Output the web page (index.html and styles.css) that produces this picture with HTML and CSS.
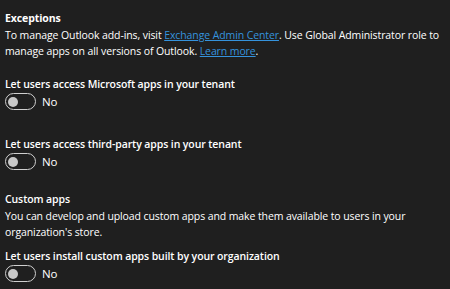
FILE: index.html
```html
<!DOCTYPE html>
<html>
<head>
    <title>Exceptions</title>
    <link rel="stylesheet" href="styles.css">
</head>
<body>
    <div class="panel">
        <div class="section">
            <div class="title">Exceptions</div>
            <p class="text">To manage Outlook add-ins, visit <a href="#">Exchange Admin Center</a>. Use Global Administrator role to manage apps on all versions of Outlook. <a href="#">Learn more</a>.</p>
        </div>

        <div class="setting first">
            <div class="label">Let users access Microsoft apps in your tenant</div>
            <div class="toggle-row">
                <span class="toggle"><span class="thumb"></span></span>
                <span class="state">No</span>
            </div>
        </div>

        <div class="setting">
            <div class="label">Let users access third-party apps in your tenant</div>
            <div class="toggle-row">
                <span class="toggle"><span class="thumb"></span></span>
                <span class="state">No</span>
            </div>
        </div>

        <div class="section custom">
            <div class="subtitle">Custom apps</div>
            <p class="text">You can develop and upload custom apps and make them available to users in your organization's store.</p>
        </div>

        <div class="setting last">
            <div class="label">Let users install custom apps built by your organization</div>
            <div class="toggle-row">
                <span class="toggle"><span class="thumb"></span></span>
                <span class="state">No</span>
            </div>
        </div>
    </div>
</body>
</html>
```

FILE: styles.css
```css
html, body {
    margin: 0;
    background-color: #1f1f1f;
}
body {
    font-family: "Open Sans", "Noto Sans", sans-serif;
    font-size: 10.5px;
    letter-spacing: -0.1px;
    line-height: 16px;
    color: #ffffff;
}
.panel {
    padding: 10px 5px 0 5px;
    width: 440px;
}
.title {
    font-weight: 700;
}
.text {
    margin: 1px 0 0 0;
}
.text a {
    color: #3593dd;
    text-decoration: underline;
}
.setting {
    margin-top: 26px;
}
.setting.first {
    margin-top: 17px;
}
.setting.last {
    margin-top: 8px;
}
.label {
    font-weight: 600;
}
.toggle-row {
    display: flex;
    align-items: center;
    gap: 6px;
    margin-top: 1px;
}
.toggle {
    box-sizing: border-box;
    width: 31px;
    height: 17px;
    border: 1px solid #cfcfcf;
    border-radius: 9px;
    display: flex;
    align-items: center;
    padding-left: 2px;
}
.thumb {
    width: 10px;
    height: 10px;
    border-radius: 50%;
    background-color: #c8c8c8;
}
.state {
    line-height: 16px;
    font-size: 11.5px;
}
.custom {
    margin-top: 21px;
}
.subtitle {
    font-weight: 600;
}
```
